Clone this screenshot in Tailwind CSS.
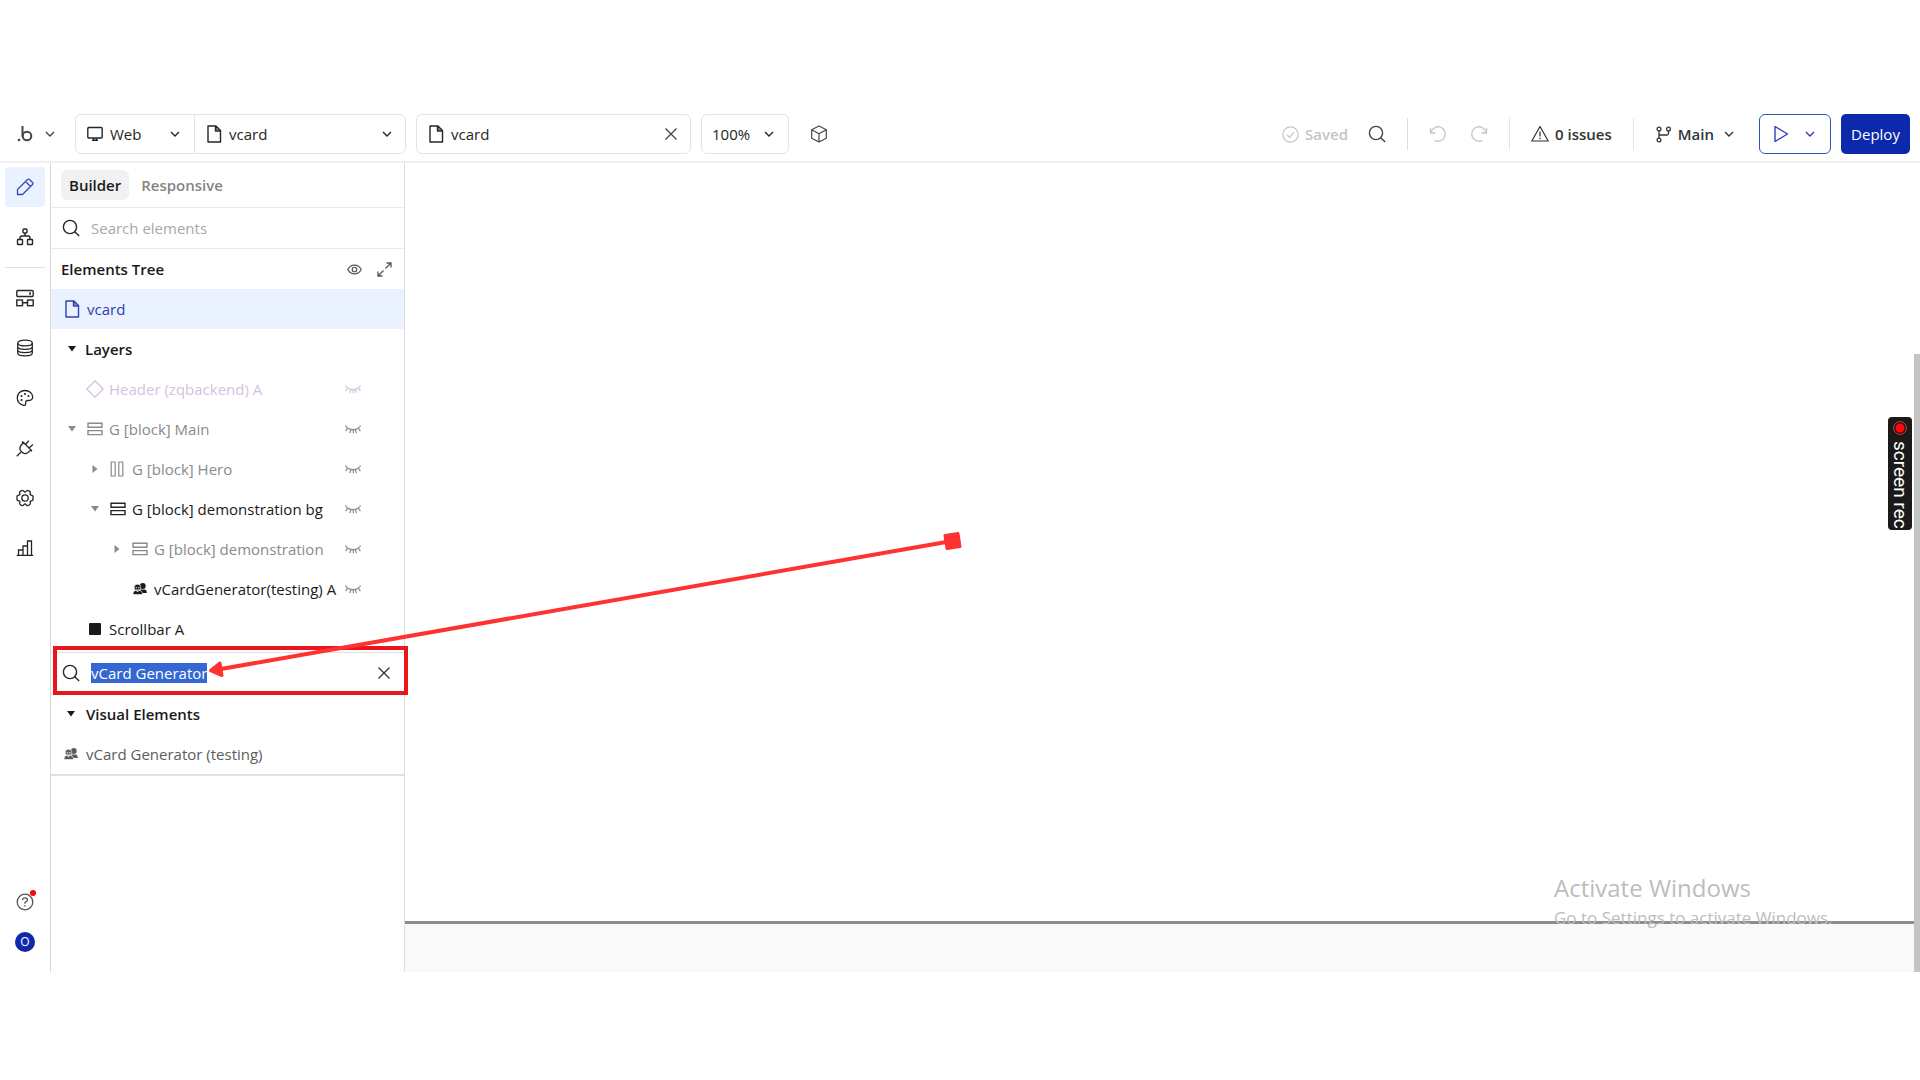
<!DOCTYPE html>
<html lang="en">
<head>
<meta charset="utf-8">
<meta name="viewport" content="width=device-width, initial-scale=1">
<title>vcard | Editor</title>
<script src="https://cdn.jsdelivr.net/npm/@tailwindcss/browser@4"></script>
</head>
<body class="bg-white">
<svg class="hidden" fill="none" stroke="currentColor">
  <defs>
    <symbol id="chev" viewBox="0 0 10 10"><path d="M1 3l4 4 4-4" fill="none" stroke="currentColor" stroke-width="1.4"/></symbol>
    <symbol id="file" viewBox="0 0 16 18"><path d="M2 1h8l4.500 4.500V17H2zM9.500 1v5h5" fill="none" stroke="currentColor" stroke-width="1.400" stroke-linejoin="round"/><path d="M10 2v3.500h4z" fill="currentColor" fill-opacity=".6"/></symbol>
    <symbol id="search" viewBox="0 0 18 18"><g fill="none" stroke="currentColor" stroke-width="1.400"><circle cx="8" cy="8" r="6.600"/><path d="M12.700 12.700l4.500 4.300"/></g></symbol>
    <symbol id="x" viewBox="0 0 14 14"><path d="M1.500 1.500l11 11M12.500 1.500l-11 11" fill="none" stroke="currentColor" stroke-width="1.300"/></symbol>
    <symbol id="closed-eye" viewBox="0 0 16 10"><path d="M.4 1.600C3.500 7 12.500 7 15.600 1.600M2.700 4.200L.6 7.200M5.800 5.600L4.900 9.200M8.300 5.800v3.400M10.400 5.500l1 3.700M13.300 4.200l2.100 3" fill="none" stroke="currentColor" stroke-width="1.200"/></symbol>
    <symbol id="rows" viewBox="0 0 16 16"><path d="M1 2.200h14v4H1zM1 9.600h14v4H1z" fill="none" stroke="currentColor" stroke-width="1.400"/></symbol>
    <symbol id="cols" viewBox="0 0 16 16"><path d="M1.200 1h4v14h-4zM8.800 1h4v14h-4z" fill="none" stroke="currentColor" stroke-width="1.200"/></symbol>
    <symbol id="down" viewBox="0 0 16 16"><path d="M4 5h8l-4 5.500z" fill="currentColor"/></symbol>
    <symbol id="right" viewBox="0 0 16 16"><path d="M5.500 4v8l5-4z" fill="currentColor"/></symbol>
    <symbol id="people" viewBox="0 0 16 16"><g fill="currentColor"><circle cx="10.800" cy="5" r="2.900"/><path d="M8.500 8.500h4.500c1.300.4 1.800 1.500 1.800 3.500H8.500z"/><path d="M1 13.500c0-2.500.8-3.600 2.700-4l1.900 1 1.900-1c2.300.4 3 1.500 3 4z" stroke="#fff" stroke-width=".6"/><circle cx="5.500" cy="6.500" r="3.300" stroke="#fff" stroke-width=".6"/></g><path d="M3.600 6.500h1.600M6 6.500h1.600M3.800 8q1.800 1.200 3.500 0" stroke="#fff" stroke-width=".7" fill="none"/></symbol>
  </defs>
</svg>

<div class="relative min-h-screen pt-[108px] font-['Open_Sans',sans-serif] text-[15px] leading-5 text-[#262626]">
  <header class="flex h-[55px] items-center border-b-2 border-[#f0f0f0] pr-[10px] pb-px">
    <button aria-label="Menu" class="flex w-[75px] items-center pl-[17px] text-[#444]">
      <svg class="h-5 w-4" viewBox="0 0 16 20" fill="none" stroke="currentColor" stroke-width="2"><path d="M5.500 2v10.500"/><circle cx="10" cy="12" r="4.300"/><circle cx="2" cy="16" r="1.300" fill="currentColor" stroke="none"/></svg>
      <svg class="ml-3 size-[10px]"><use href="#chev"/></svg>
    </button>
    <div class="flex h-10 w-[331px] rounded-md border border-[#e3e3e3]">
      <label class="flex w-[119px] items-center border-r border-[#e3e3e3] pr-[14px] pl-[11px]">
        <svg class="size-4 shrink-0" viewBox="0 0 16 16" fill="none" stroke="currentColor" stroke-width="1.400"><rect x=".8" y="1.500" width="14.400" height="10.500" rx="1"/><path d="M5 14.300h6M6.500 12v2M9.500 12v2"/></svg>
        <select aria-label="Platform" class="ml-[7px] min-w-0 flex-1 appearance-none bg-transparent"><option>Web</option></select>
        <svg class="size-[10px]"><use href="#chev"/></svg>
      </label>
      <label class="flex flex-1 items-center pr-[13px] pl-[11px]">
        <svg class="h-[18px] w-4 shrink-0"><use href="#file"/></svg>
        <select aria-label="Page" class="ml-[7px] min-w-0 flex-1 appearance-none bg-transparent"><option>vcard</option></select>
        <svg class="size-[10px]"><use href="#chev"/></svg>
      </label>
    </div>
    <div class="ml-[10px] flex h-10 w-[275px] items-center rounded-md border border-[#e3e3e3] pr-3 pl-[11px]">
      <svg class="h-[18px] w-4"><use href="#file"/></svg>
      <span class="ml-[7px] flex-1">vcard</span>
      <button aria-label="Close vcard" class="text-[#444]"><svg class="size-[14px]"><use href="#x"/></svg></button>
    </div>
    <label class="ml-[10px] flex h-10 w-[88px] items-center rounded-md border border-[#e3e3e3] pr-[14px] pl-[10px]">
      <select aria-label="Zoom" class="min-w-0 flex-1 appearance-none bg-transparent"><option>100%</option></select>
      <svg class="size-[10px]"><use href="#chev"/></svg>
    </label>
    <button aria-label="Components" class="ml-[21px] text-[#444]"><svg class="size-[18px]" viewBox="0 0 18 18" fill="none" stroke="currentColor" stroke-width="1.200" stroke-linejoin="round"><path d="M9 1l7.300 3.800v8.400L9 17l-7.300-3.800V4.800zM1.700 4.800L9 8.800l7.300-4M9 8.800V17"/></svg></button>

    <div class="ml-auto flex items-center font-semibold">
      <span class="flex items-center gap-1.5 font-semibold text-[#c4c4c4]"><svg class="size-[17px]" viewBox="0 0 17 17" fill="none" stroke="currentColor" stroke-width="1.200"><circle cx="8.500" cy="8.500" r="7.700"/><path d="M5 8.700l2.500 2.600 4.500-5.200"/></svg>Saved</span>
      <button aria-label="Search" class="ml-5 text-[#444]"><svg class="size-[18px]"><use href="#search"/></svg></button>
      <span class="mx-[21px] h-8 w-px bg-[#dedede]"></span>
      <button aria-label="Undo" class="text-[#c8c8c8]"><svg class="size-[18px]" viewBox="0 0 18 18" fill="none" stroke="currentColor" stroke-width="1.400"><path d="M1.500 3v5h5M2 7.500A7.200 7.200 0 1 1 5.500 15.300"/></svg></button>
      <button aria-label="Redo" class="ml-[23px] text-[#c8c8c8]"><svg class="size-[18px]" viewBox="0 0 18 18" fill="none" stroke="currentColor" stroke-width="1.400"><path d="M16.500 3v5h-5M16 7.500A7.200 7.200 0 1 0 12.500 15.300"/></svg></button>
      <span class="mx-[21px] h-8 w-px bg-[#e6e6e6]"></span>
      <button class="flex items-center gap-1.5 text-[#333]"><svg class="size-[18px]" viewBox="0 0 18 18" fill="none" stroke="currentColor" stroke-width="1.200" stroke-linejoin="round"><path d="M9 1.500L17.200 16H.8zM9 6.500v5M9 12.800v1.400"/></svg>0 issues</button>
      <span class="mx-[21px] h-8 w-px bg-[#e6e6e6]"></span>
      <button class="flex items-center text-[#333]"><svg class="size-[17px]" viewBox="0 0 17 17" fill="none" stroke="currentColor" stroke-width="1.300"><circle cx="4" cy="3" r="1.900"/><circle cx="4" cy="14" r="1.900"/><circle cx="13.500" cy="3" r="1.900"/><path d="M4 5v7M13.500 5v2.500q0 1.500-1.500 1.500H4"/></svg><span class="ml-1.5">Main</span><svg class="ml-[10px] size-[10px]"><use href="#chev"/></svg></button>
      <button aria-label="Preview" class="ml-[25px] flex h-10 w-[72px] items-center justify-between rounded-md border border-[#2d57b8] pr-[15px] pl-[13px] text-[#2d3ebd]"><svg class="h-[18px] w-4" viewBox="0 0 16 18" fill="none" stroke="currentColor" stroke-width="1.400" stroke-linejoin="round"><path d="M2 1.500L14.500 9 2 16.500z"/></svg><svg class="size-[10px]"><use href="#chev"/></svg></button>
      <button class="ml-[10px] h-10 w-[69px] rounded-[5px] bg-[#0c29ab] font-medium text-white">Deploy</button>
    </div>
  </header>

  <div class="flex h-[809px]">
    <nav class="flex w-[51px] shrink-0 flex-col items-center border-r border-[#d9d9d9] pt-1 text-[#262626]">
      <a href="#design" aria-label="Design" class="grid size-10 place-items-center rounded bg-[#e9f2fe] text-[#3746b5]"><svg class="size-[18px]" viewBox="0 0 18 18" fill="none" stroke="currentColor" stroke-width="1.300" stroke-linejoin="round"><path d="M1.500 16.500v-5L11.500 1.500q1-.8 2 0l3 3q.8 1 0 2L6.500 16.500zM9.500 3.500l5 5"/></svg></a>
      <a href="#workflow" aria-label="Workflow" class="mt-[10px] grid size-10 place-items-center"><svg class="size-[18px]" viewBox="0 0 18 18" fill="none" stroke="currentColor" stroke-width="1.400"><rect x="7" y="1" width="4" height="4" rx="1"/><path d="M9 5v3M4 11.500V10q0-2 2-2h6q2 0 2 2v1.500"/><rect x="1.500" y="11.500" width="5" height="5" rx=".5"/><rect x="11.500" y="11.500" width="5" height="5" rx=".5"/></svg></a>
      <span class="mt-[10px] h-px w-10 bg-[#e0e0e0]"></span>
      <div class="mt-[10px] flex flex-col gap-[10px]">
        <a href="#views" aria-label="Views" class="grid size-10 place-items-center"><svg class="size-[18px]" viewBox="0 0 18 18" fill="none" stroke="currentColor" stroke-width="1.400"><rect x=".8" y="1.500" width="16.400" height="6" rx="1"/><path d="M14 3v3M6.500 13.800h5"/><rect x=".8" y="11" width="5.700" height="5.700"/><rect x="11.500" y="11" width="5.700" height="5.700"/></svg></a>
        <a href="#data" aria-label="Data" class="grid size-10 place-items-center"><svg class="size-[18px]" viewBox="0 0 18 18" fill="none" stroke="currentColor" stroke-width="1.300"><ellipse cx="9" cy="4" rx="7.300" ry="2.900"/><path d="M1.700 4v10c0 3.800 14.600 3.800 14.600 0V4M1.700 7.500c0 3.800 14.600 3.800 14.600 0M1.700 10.800c0 3.800 14.600 3.800 14.600 0"/></svg></a>
        <a href="#styles" aria-label="Styles" class="grid size-10 place-items-center"><svg class="size-[18px]" viewBox="0 0 18 18" fill="none" stroke="currentColor" stroke-width="1.300"><path d="M9 1.500c4.500 0 7.700 3 7.700 6.500 0 3-2.200 3.500-4.700 3.500-2 0-2.500 1-2.300 2.500.2 1.800-.7 2.800-2.200 2.300C4 15.300 1.300 12.700 1.300 9 1.300 4.500 4.500 1.500 9 1.500z"/><g fill="currentColor" stroke="none"><circle cx="9" cy="5" r="1.100"/><circle cx="5.500" cy="7" r="1.100"/><circle cx="12.500" cy="7" r="1.100"/><circle cx="5.500" cy="11" r="1.100"/></g></svg></a>
        <a href="#plugins" aria-label="Plugins" class="grid size-10 place-items-center"><svg class="size-[18px]" viewBox="0 0 18 18" fill="none" stroke="currentColor" stroke-width="1.300"><path d="M.8 17.200l4-4M9.500 5.500l3.300-3.800M13 9l4-3.500M7.500 3.500l7.500 7.500-3 2.500q-3.500 2.500-6.500-.8-3-3.200-.5-6.200zM7.300 4L6 2.500M14.500 10.800l1.500 1.500"/></svg></a>
        <a href="#settings" aria-label="Settings" class="grid size-10 place-items-center"><svg class="size-[18px]" viewBox="0 0 18 18" fill="none" stroke="currentColor" stroke-width="1.300" stroke-linejoin="round"><path d="M5.800 1.500q.8-.4 1.500.3L9 3.200l1.700-1.400q.7-.7 1.500-.3l1.500.9q.7.500.6 1.300l-.2 1.900 1.900.7q.9.300 1 1.100v3.200q-.1.800-1 1.100l-1.900.7.200 1.900q.1.800-.6 1.300l-1.500.9q-.8.400-1.500-.3L9 14.800l-1.700 1.400q-.7.700-1.500.3l-1.500-.9q-.7-.5-.6-1.300l.2-1.900-1.900-.7q-.9-.3-1-1.100V7.400q.1-.8 1-1.100l1.900-.7-.2-1.900q-.1-.8.600-1.300z"/><circle cx="9" cy="9" r="3.200"/></svg></a>
        <a href="#logs" aria-label="Logs" class="grid size-10 place-items-center"><svg class="size-[18px]" viewBox="0 0 18 18" fill="none" stroke="currentColor" stroke-width="1.300"><path d="M.8 16.300h16.400M2.500 16v-5H7M7 16V7h4.500M11.500 16V2h4v14"/></svg></a>
      </div>
      <button aria-label="Help" class="relative mt-auto text-[#555]"><svg class="size-[18px]" viewBox="0 0 18 18" fill="none" stroke="currentColor" stroke-width="1.300"><circle cx="9" cy="9" r="7.800"/><path d="M6.500 7q.2-2.200 2.500-2.200T11.500 7Q11.400 8.200 9 9.300v1.400M9 12v1.500"/></svg><span class="absolute -top-[3px] -right-[2px] size-1.5 rounded-full bg-[#f00812]"></span></button>
      <button aria-label="Account" class="mt-[21px] mb-5 size-5 rounded-full bg-[#1029a8] text-xs leading-5 text-white">O</button>
    </nav>

    <aside class="relative flex w-[354px] shrink-0 flex-col border-r border-[#dedede]">
      <div class="flex h-[45px] shrink-0 items-center border-b border-[#ebebeb] pl-[10px] font-semibold">
        <button class="h-[30px] rounded-md bg-[#f1f1f1] px-2 text-[#1a1a1a]">Builder</button>
        <button class="ml-[12px] text-[#858585]">Responsive</button>
      </div>
      <label class="flex h-[41px] shrink-0 items-center border-b border-[#ebebeb] pl-[11px]">
        <svg class="size-[18px]"><use href="#search"/></svg>
        <input aria-label="Search elements" placeholder="Search elements" class="ml-[11px] flex-1 outline-none placeholder:text-[#a8a8a8]">
      </label>
      <div class="flex h-10 shrink-0 items-center gap-[15px] pr-3 pl-[10px] text-[#555]">
        <h2 class="flex-1 font-semibold text-[#1a1a1a]">Elements Tree</h2>
        <button aria-label="Show hidden"><svg class="size-[15px]" viewBox="0 0 16 16" fill="none" stroke="currentColor" stroke-width="1.300"><path d="M.8 8C4 1.700 12 1.700 15.200 8 12 14.300 4 14.300.8 8z"/><circle cx="8" cy="8" r="2.400"/></svg></button>
        <button aria-label="Expand"><svg class="size-[15px]" viewBox="0 0 15 15" fill="none" stroke="currentColor" stroke-width="1.300"><path d="M9.500 1H14v4.500M14 1L8.500 6.500M1 9.500V14h4.500M1 14l5.500-5.500"/></svg></button>
      </div>
      <ul>
        <li class="flex h-10 items-center bg-[#e9f2fe] pl-[13px] text-[#2f41b3]"><svg class="h-[18px] w-4"><use href="#file"/></svg><span class="ml-[7px]">vcard</span></li>
        <li class="flex h-10 items-center pl-[13px] font-semibold text-[#1a1a1a]"><svg class="size-4"><use href="#down"/></svg><span class="ml-[5px]">Layers</span></li>
        <li class="flex h-10 items-center pr-[43px] pl-[35px] text-[#d6bfe0]"><svg class="size-[18px]" viewBox="0 0 18 18" fill="none" stroke="currentColor" stroke-width="1.300"><path d="M9 .8L17.200 9 9 17.200.8 9z"/></svg><span class="ml-[5px] flex-1">Header (zqbackend) A</span><svg class="h-[10px] w-4"><use href="#closed-eye"/></svg></li>
        <li class="flex h-10 items-center pr-[43px] pl-[13px] text-[#8a8a8a]"><svg class="size-4"><use href="#down"/></svg><svg class="ml-[7px] size-4"><use href="#rows"/></svg><span class="ml-1.5 flex-1">G [block] Main</span><svg class="h-[10px] w-4"><use href="#closed-eye"/></svg></li>
        <li class="flex h-10 items-center pr-[43px] pl-9 text-[#8a8a8a]"><svg class="size-4"><use href="#right"/></svg><svg class="ml-[7px] size-4"><use href="#cols"/></svg><span class="ml-1.5 flex-1">G [block] Hero</span><svg class="h-[10px] w-4"><use href="#closed-eye"/></svg></li>
        <li class="flex h-10 items-center pr-[43px] pl-9 text-[#8a8a8a]"><svg class="size-4"><use href="#down"/></svg><svg class="ml-[7px] size-4 text-[#262626]"><use href="#rows"/></svg><span class="ml-1.5 flex-1 text-[#1a1a1a]">G [block] demonstration bg</span><svg class="h-[10px] w-4"><use href="#closed-eye"/></svg></li>
        <li class="flex h-10 items-center pr-[43px] pl-[58px] text-[#8a8a8a]"><svg class="size-4"><use href="#right"/></svg><svg class="ml-[7px] size-4"><use href="#rows"/></svg><span class="ml-1.5 flex-1">G [block] demonstration</span><svg class="h-[10px] w-4"><use href="#closed-eye"/></svg></li>
        <li class="flex h-10 items-center pr-[43px] pl-[81px] text-[#8a8a8a]"><svg class="size-4 text-[#1a1a1a]"><use href="#people"/></svg><span class="ml-1.5 flex-1 whitespace-nowrap text-[#1a1a1a]">vCardGenerator(testing) A</span><svg class="h-[10px] w-4"><use href="#closed-eye"/></svg></li>
        <li class="flex h-10 items-center pl-[38px] text-[#1a1a1a]"><span class="size-3 rounded-[1px] bg-[#1a1a1a]"></span><span class="ml-2">Scrollbar A</span></li>
      </ul>
      <div class="relative mt-[3px] flex h-[42px] shrink-0 items-center border-y border-[#e0e0e0] pr-[13px] pl-[11px]">
        <svg class="size-[18px]"><use href="#search"/></svg>
        <input aria-label="Search visual elements" value="vCard Generator" class="field-sizing-content ml-[11px] h-5 bg-[#3467d1] text-white outline-none">
        <button aria-label="Clear search" class="ml-auto text-[#333]"><svg class="size-[14px]"><use href="#x"/></svg></button>
        <div class="absolute -top-[7px] -right-[4px] bottom-[-2px] left-[2px] border-4 border-[#ea161d]"></div>
      </div>
      <div class="flex h-10 shrink-0 items-center pl-3 font-semibold text-[#1a1a1a]"><svg class="size-4"><use href="#down"/></svg><span class="ml-[7px]">Visual Elements</span></div>
      <div class="flex h-[42px] shrink-0 items-center border-b-2 border-[#e0e0e0] pl-3 text-[#5c5c5c]"><svg class="size-4"><use href="#people"/></svg><span class="ml-[7px]">vCard Generator (testing)</span></div>
    </aside>

    <main class="relative flex flex-1 flex-col pr-1.5">
      <div class="flex-1"></div>
      <div class="h-[51px] border-t-3 border-[#868f88] bg-[#f9f9f9]"></div>
      <div class="absolute top-[191px] right-0 bottom-0 w-1.5 bg-[#c4c4c4]"></div>
      <div class="absolute right-[84px] bottom-[40px] w-[282px] whitespace-nowrap text-[#bdbdbd]">
        <p class="text-2xl leading-8">Activate Windows</p>
        <p class="text-[17px] leading-7">Go to Settings to activate Windows.</p>
      </div>
      <button class="absolute top-[254px] right-2 flex h-[113px] w-6 items-center gap-1.5 rounded bg-[#1a1a1a] pt-1 font-['Roboto',sans-serif] text-[19px] leading-6 whitespace-nowrap text-white [writing-mode:vertical-rl]">
        <svg class="size-[14px] shrink-0" viewBox="0 0 14 14"><circle cx="7" cy="7" r="6.400" fill="none" stroke="#e33"/><circle cx="7" cy="7" r="4.500" fill="#ff0a0a"/></svg>
        <span>screen rec</span>
      </button>
    </main>
  </div>

  <svg class="pointer-events-none absolute top-[530px] left-[200px] h-[160px] w-[770px]" viewBox="200 530 770 160" fill="#ff3131" stroke="#ff3131" stroke-linejoin="round">
    <path d="M218 669.500L952 541" stroke-width="4"/>
    <path d="M210.500 670.500L220 663l2 12.500z" stroke-width="3"/>
    <path d="M945 535.500l13-2 2 13-13 2z" stroke-width="3"/>
  </svg>
</div>
</body>
</html>
